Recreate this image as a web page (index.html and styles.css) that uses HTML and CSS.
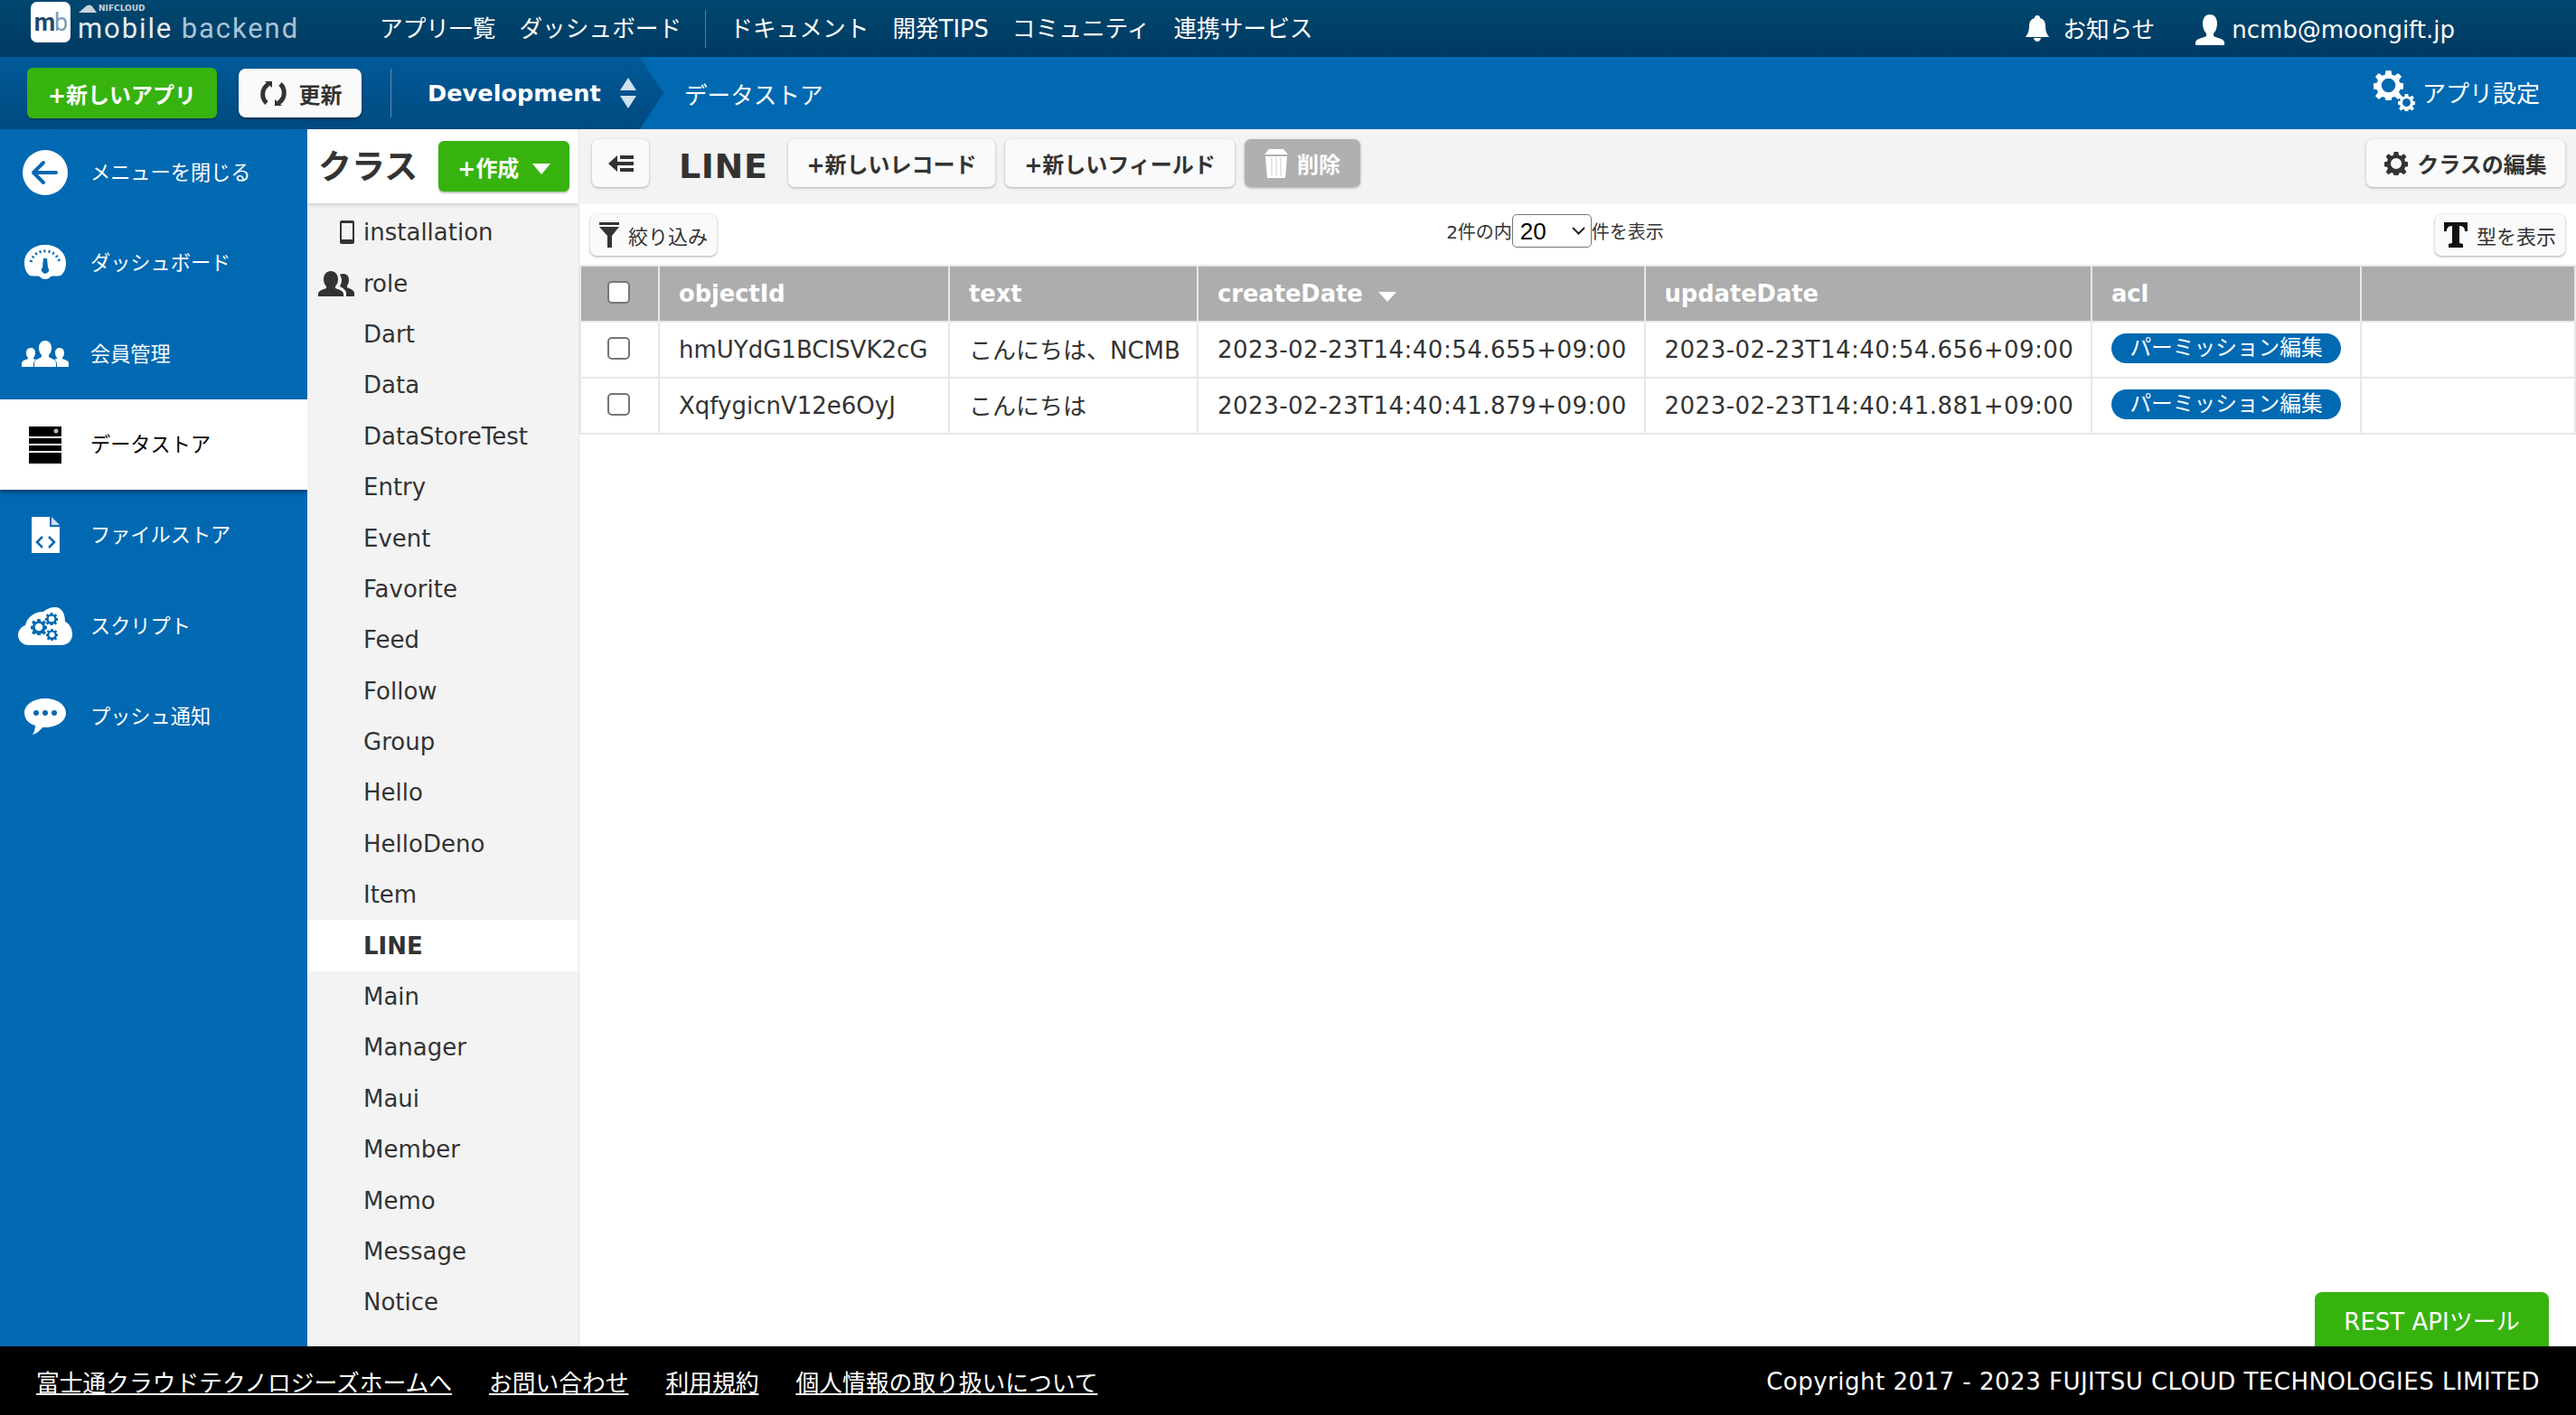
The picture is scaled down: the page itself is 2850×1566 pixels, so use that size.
FILE: index.html
```html
<!DOCTYPE html>
<html lang="ja">
<head>
    <meta charset="UTF-8">
    <title>mobile backend</title>
    <link rel="stylesheet" href="styles.css">
</head>
<body>
    <header class="top-bar">
        <div class="logo">
            <span class="logo-mark"><span class="logo-m">m</span><span class="logo-b">b</span></span>
            <div class="logo-text">
                <span class="logo-small">
                    <svg width="20" height="9" viewBox="0 0 20 9"><path fill="#c8d4dc" d="M0 9 8 2c3-2 5-2 7 0l5 7z"/></svg>
                    NIFCLOUD
                </span>
                <span class="logo-name">mobile <span class="logo-name-light">backend</span></span>
            </div>
        </div>
        <nav class="top-nav">
            <a>アプリ一覧</a>
            <a>ダッシュボード</a>
            <span class="top-sep"></span>
            <a>ドキュメント</a>
            <a>開発TIPS</a>
            <a>コミュニティ</a>
            <a>連携サービス</a>
        </nav>
        <div class="top-right">
            <a class="notice">
                <svg class="icon-bell" viewBox="0 0 28 30"><path fill="#fff" d="M14 1c2 0 3 1 3 3 4 1 6 4 6 9 0 6 2 9 4 12H1c2-3 4-6 4-12 0-5 2-8 6-9 0-2 1-3 3-3zM10 26h8c0 2-2 4-4 4s-4-2-4-4z"/></svg>
                お知らせ
            </a>
            <a class="user">
                <svg class="icon-user" viewBox="0 0 32 34"><path fill="#fff" d="M16 0c5 0 8 4 8 10 0 5-2 9-4 11v3c4 2 12 3 12 7v3H0v-3c0-4 8-5 12-7v-3c-2-2-4-6-4-11C8 4 11 0 16 0z"/></svg>
                ncmb@moongift.jp
            </a>
        </div>
    </header>

    <div class="app-bar">
        <div class="app-bar-left">
            <button class="btn-green btn-new-app">+新しいアプリ</button>
            <button class="btn-refresh">
                <svg class="icon-refresh" viewBox="0 0 33 27"><g fill="none" stroke="#333" stroke-width="5"><path d="M11 3C3 8 3 19 9 24"/><path d="M22 24C30 19 30 8 24 3"/></g><path fill="#333" d="M7 0h8v7zM26 27h-8v-7z"/></svg>
                更新
            </button>
            <span class="app-sep"></span>
            <span class="env-name">Development</span>
            <svg class="icon-updown" viewBox="0 0 20 34"><path fill="#cfe0ee" d="M10 0l9 14H1zM1 20h18l-9 14z"/></svg>
        </div>
        <span class="crumb">データストア</span>
        <a class="app-settings">
            <svg class="icon-gears" viewBox="0 0 46 46"><use href="#gear" x="0" y="0" width="33" height="33" fill="#fff"/><use href="#gear" x="27" y="26" width="19" height="19" fill="#fff"/></svg>
            アプリ設定
        </a>
    </div>

    <div class="workspace">
        <aside class="sidebar">
            <a class="side-item">
                <span class="side-icon"><svg width="50" height="50" viewBox="0 0 50 50"><circle cx="25" cy="25" r="25" fill="#fff"/><path fill="none" stroke="#0069b2" stroke-width="4" stroke-linecap="round" stroke-linejoin="round" d="M37 25H13M23 14 12 25l11 11"/></svg></span>
                <span class="side-label">メニューを閉じる</span>
            </a>
            <a class="side-item">
                <span class="side-icon"><svg width="46" height="41" viewBox="0 0 46 41"><path fill="#fff" d="M23 0c13 0 23 8 23 20 0 6-2 11-6 14-4 1-8 0-11 1-2 4-10 4-12 0-3-1-7 0-11-1C2 31 0 26 0 20 0 8 10 0 23 0z"/><path fill="none" stroke="#0069b2" stroke-width="3" stroke-dasharray="2 3" d="M7 19C10 10 16 7 23 7s13 3 16 12"/><path fill="#0069b2" d="M21 15h4l1 10a4 4 0 1 1-6 0z"/></svg></span>
                <span class="side-label">ダッシュボード</span>
            </a>
            <a class="side-item">
                <span class="side-icon"><svg width="52" height="29" viewBox="0 0 52 29"><g fill="#fff"><path d="M10 8c3 0 5 2 5 5s-1 5-2 6v1l3 1c-2 1-3 3-3 5v3H0v-4c0-3 5-4 7-5v-1c-1-1-2-3-2-5 0-4 2-6 5-6z"/><path d="M42 8c-3 0-5 2-5 5s1 5 2 6v1l-3 1c2 1 3 3 3 5v3h13v-4c0-3-5-4-7-5v-1c1-1 2-3 2-5 0-4-2-6-5-6z"/><path d="M26 0c4 0 7 3 7 8 0 3-1 6-3 8v2c3 2 8 3 8 7v4H14v-4c0-4 5-5 8-7v-2c-2-2-3-5-3-8 0-5 3-8 7-8z"/></g></svg></span>
                <span class="side-label">会員管理</span>
            </a>
            <a class="side-item side-item-active">
                <span class="side-icon"><svg width="36" height="41" viewBox="0 0 36 41"><path fill="#000" d="M0 0h36v11H0zM0 13h36v6H0zM0 21h36v6H0zM0 29h36v12H0z"/><circle cx="30" cy="5" r="2.5" fill="#bbb"/></svg></span>
                <span class="side-label">データストア</span>
            </a>
            <a class="side-item">
                <span class="side-icon"><svg width="31" height="40" viewBox="0 0 31 40"><path fill="#fff" d="M0 0h20v11h11v29H0z"/><path fill="#cfe0ee" d="M22 0l9 9h-9z"/><path fill="none" stroke="#0069b2" stroke-width="2.5" d="M12 22l-6 6 6 6M19 22l6 6-6 6"/></svg></span>
                <span class="side-label">ファイルストア</span>
            </a>
            <a class="side-item">
                <span class="side-icon"><svg width="60" height="42" viewBox="0 0 60 42"><path fill="#fff" d="M12 42C5 42 0 37 0 31c0-5 3-9 8-11 2-9 10-15 20-15 3-3 8-5 13-5 8 0 11 8 11 16 5 2 8 8 8 14 0 7-5 12-12 12z"/><use href="#gear" x="14" y="13" width="18" height="18" fill="#0069b2"/><use href="#gear" x="30" y="6" width="14" height="14" fill="#0069b2"/><use href="#gear" x="31" y="24" width="13" height="13" fill="#0069b2"/></svg></span>
                <span class="side-label">スクリプト</span>
            </a>
            <a class="side-item">
                <span class="side-icon"><svg width="46" height="40" viewBox="0 0 46 40"><path fill="#fff" d="M23 0c13 0 23 7 23 16s-10 16-23 16h-3c-3 4-7 7-11 8 2-3 3-7 3-10C5 28 0 23 0 16 0 7 10 0 23 0z"/><circle cx="13" cy="16" r="3" fill="#0069b2"/><circle cx="23" cy="16" r="3" fill="#0069b2"/><circle cx="33" cy="16" r="3" fill="#0069b2"/></svg></span>
                <span class="side-label">プッシュ通知</span>
            </a>
        </aside>

        <section class="class-panel">
            <div class="class-head">
                <h2>クラス</h2>
                <button class="btn-green btn-create">+作成 <span class="tri-white"></span></button>
            </div>
            <ul class="class-list">
                <li><span class="class-icon"><svg width="16" height="26" viewBox="0 0 16 26"><path fill="#333" fill-rule="evenodd" d="M2 0h12a2 2 0 0 1 2 2v22a2 2 0 0 1-2 2H2a2 2 0 0 1-2-2V2a2 2 0 0 1 2-2zM2 3v18h12V3z"/></svg></span>installation</li>
                <li><span class="class-icon"><svg width="40" height="28" viewBox="0 0 40 28"><path fill="#333" d="M14 0c5 0 8 4 8 9 0 3-1 6-3 8v2c3 1 9 3 9 6v3H0v-3c0-3 6-5 9-6v-2c-2-2-3-5-3-8 0-5 3-9 8-9zM28 3c4 0 6 3 6 7 0 3-1 5-2 6v2c2 1 8 3 8 6v4h-9v-4c0-3-5-6-7-7 1-2 2-4 2-7 0-2-1-4-2-6 1-1 3-1 4-1z"/></svg></span>role</li>
                <li><span class="class-icon"></span>Dart</li>
                <li><span class="class-icon"></span>Data</li>
                <li><span class="class-icon"></span>DataStoreTest</li>
                <li><span class="class-icon"></span>Entry</li>
                <li><span class="class-icon"></span>Event</li>
                <li><span class="class-icon"></span>Favorite</li>
                <li><span class="class-icon"></span>Feed</li>
                <li><span class="class-icon"></span>Follow</li>
                <li><span class="class-icon"></span>Group</li>
                <li><span class="class-icon"></span>Hello</li>
                <li><span class="class-icon"></span>HelloDeno</li>
                <li><span class="class-icon"></span>Item</li>
                <li class="class-selected"><span class="class-icon"></span>LINE</li>
                <li><span class="class-icon"></span>Main</li>
                <li><span class="class-icon"></span>Manager</li>
                <li><span class="class-icon"></span>Maui</li>
                <li><span class="class-icon"></span>Member</li>
                <li><span class="class-icon"></span>Memo</li>
                <li><span class="class-icon"></span>Message</li>
                <li><span class="class-icon"></span>Notice</li>
            </ul>
        </section>

        <main class="content">
            <div class="toolbar">
                <button class="btn-white btn-collapse">
                    <svg width="28" height="20" viewBox="0 0 28 20"><path fill="#333" d="M10 1v18L0 10zM13 1h15v4H13zM10 8h18v4H10zM13 15h15v4H13z"/></svg>
                </button>
                <h1 class="class-title">LINE</h1>
                <button class="btn-white btn-add-record">+新しいレコード</button>
                <button class="btn-white btn-add-field">+新しいフィールド</button>
                <button class="btn-disabled">
                    <svg width="26" height="32" viewBox="0 0 26 32"><path fill="#fff" d="M5 0h16l5 6H0zM1 8h24l-2 24H3z"/><path stroke="#ddd" stroke-width="1.5" d="M8 10v20M13 10v20M18 10v20"/></svg>
                    削除
                </button>
                <button class="btn-white btn-edit-class">
                    <svg width="26" height="26" viewBox="0 0 34 34"><use href="#gear" width="34" height="34" fill="#333"/></svg>
                    クラスの編集
                </button>
            </div>

            <div class="subbar">
                <button class="btn-small">
                    <svg width="22" height="28" viewBox="0 0 22 28"><path fill="#333" d="M0 0h22v3H0zM0 5h22l-8 10v13H9V15z"/></svg>
                    絞り込み
                </button>
                <div class="page-size">
                    2件の内<span class="select-wrap"><select class="page-select"><option>20</option><option>50</option><option>100</option></select><svg class="select-arrow" width="15" height="9" viewBox="0 0 15 9"><path fill="none" stroke="#222" stroke-width="2" d="M1 1l6.500 6.500L14 1"/></svg></span>件を表示
                </div>
                <button class="btn-small">
                    <svg width="26" height="28" viewBox="0 0 26 28"><path fill="#111" d="M0 0h26v10h-3c0-3-1-6-6-6v19l4 1v4H5v-4l4-1V4C4 4 3 7 3 10H0z"/></svg>
                    型を表示
                </button>
            </div>

            <table class="data-table">
                <colgroup>
                    <col class="col-check"><col class="col-id"><col class="col-text"><col class="col-date"><col class="col-date"><col class="col-acl"><col>
                </colgroup>
                <thead>
                    <tr>
                        <th class="cell-check"><input type="checkbox"></th>
                        <th>objectId</th>
                        <th>text</th>
                        <th>createDate <span class="tri-sort"></span></th>
                        <th>updateDate</th>
                        <th>acl</th>
                        <th></th>
                    </tr>
                </thead>
                <tbody>
                    <tr>
                        <td class="cell-check"><input type="checkbox"></td>
                        <td>hmUYdG1BCISVK2cG</td>
                        <td class="cell-jp">こんにちは、NCMB</td>
                        <td class="cell-date">2023-02-23T14:40:54.655+09:00</td>
                        <td class="cell-date">2023-02-23T14:40:54.656+09:00</td>
                        <td><a class="pill">パーミッション編集</a></td>
                        <td></td>
                    </tr>
                    <tr>
                        <td class="cell-check"><input type="checkbox"></td>
                        <td>XqfygicnV12e6OyJ</td>
                        <td class="cell-jp">こんにちは</td>
                        <td class="cell-date">2023-02-23T14:40:41.879+09:00</td>
                        <td class="cell-date">2023-02-23T14:40:41.881+09:00</td>
                        <td><a class="pill">パーミッション編集</a></td>
                        <td></td>
                    </tr>
                </tbody>
            </table>

            <a class="rest-tool">REST APIツール</a>
        </main>
    </div>

    <footer class="footer">
        <nav class="footer-links">
            <a>富士通クラウドテクノロジーズホームへ</a>
            <a>お問い合わせ</a>
            <a>利用規約</a>
            <a>個人情報の取り扱いについて</a>
        </nav>
        <span class="copyright">Copyright 2017 - 2023 FUJITSU CLOUD TECHNOLOGIES LIMITED</span>
    </footer>

    <svg class="sprite" xmlns="http://www.w3.org/2000/svg">
        <symbol id="gear" viewBox="0 0 34 34">
            <path fill-rule="evenodd" d="M14 0h6l1 5 3 1 4-3 4 4-3 4 1 3 5 1v6l-5 1-1 3 3 4-4 4-4-3-3 1-1 5h-6l-1-5-3-1-4 3-4-4 3-4-1-3-5-1v-6l5-1 1-3-3-4 4-4 4 3 3-1zM17 9a8 8 0 1 0 0 16 8 8 0 0 0 0-16z"/>
        </symbol>
    </svg>
</body>
</html>
```

FILE: styles.css
```css
:root {
    --blue: #0069b2;
    --green: #36b30f;
    --text-color: #333;
    --light-bg: #f3f3f3;
    --line: #e8e8e8;
}

* {
    margin: 0;
    padding: 0;
    box-sizing: border-box;
}

html, body {
    height: 100%;
}

body {
    display: flex;
    flex-direction: column;
    font-family: "DejaVu Sans", "Noto Sans CJK JP", sans-serif;
    font-size: 26px;
    color: var(--text-color);
    overflow: hidden;
}

button {
    font-family: inherit;
    border: none;
    cursor: pointer;
}

.sprite {
    display: none;
}

/* top bar */
.top-bar {
    display: flex;
    align-items: center;
    height: 63px;
    flex-shrink: 0;
    background: linear-gradient(#00476f, #003a62);
    color: #fff;
    padding-left: 34px;
}

.logo {
    display: flex;
    align-items: flex-start;
    width: 386px;
    height: 63px;
    padding-top: 2px;
    gap: 8px;
}

.logo-mark {
    display: flex;
    align-items: center;
    justify-content: center;
    width: 44px;
    height: 45px;
    background: #fff;
    border-radius: 7px;
    font-family: "Roboto", sans-serif;
    font-size: 27px;
    letter-spacing: -1px;
}

.logo-m {
    color: #1d4a6b;
    font-weight: bold;
}

.logo-b {
    color: #7f9db3;
}

.logo-text {
    display: flex;
    flex-direction: column;
}

.logo-small {
    display: flex;
    align-items: center;
    gap: 2px;
    font-size: 9px;
    font-weight: bold;
    line-height: 14px;
    padding-left: 1px;
    color: #c8d4dc;
}

.logo-name {
    font-family: "Roboto", sans-serif;
    font-size: 31px;
    line-height: 32px;
    color: #e6ecf0;
    letter-spacing: 1.9px;
    white-space: nowrap;
}

.logo-name-light {
    color: #a9c3d5;
}

.top-nav {
    display: flex;
    align-items: center;
    gap: 26px;
    margin-top: -4px;
    font-size: 25.7px;
    white-space: nowrap;
}

.top-sep {
    width: 1px;
    height: 42px;
    margin-top: 4px;
    background: #5d7f97;
}

.top-right {
    display: flex;
    align-items: center;
    margin-left: auto;
    padding-right: 134px;
    gap: 45px;
    white-space: nowrap;
}

.notice, .user {
    display: flex;
    align-items: center;
}

.notice {
    gap: 14px;
    font-size: 25.6px;
    margin-top: -2px;
}

.user {
    gap: 8px;
    margin-top: 2px;
}

.icon-bell {
    width: 28px;
    height: 30px;
}

.icon-user {
    width: 32px;
    height: 34px;
}

/* app bar */
.app-bar {
    display: flex;
    align-items: center;
    height: 80px;
    flex-shrink: 0;
    background: var(--blue);
    color: #fff;
}

.app-bar-left {
    display: flex;
    align-items: center;
    width: 734px;
    height: 80px;
    padding-left: 30px;
    background: linear-gradient(#005a98, #004a80);
    clip-path: polygon(0 0, 708px 0, 734px 50%, 708px 100%, 0 100%);
}

.btn-green {
    background: var(--green);
    color: #fff;
    font-weight: bold;
    border-radius: 6px;
    box-shadow: 0 2px 2px rgba(0,0,0,0.25);
}

.btn-new-app {
    width: 210px;
    height: 56px;
    font-size: 24px;
}

.btn-refresh {
    display: flex;
    align-items: center;
    justify-content: center;
    gap: 12px;
    width: 136px;
    height: 54px;
    margin-left: 24px;
    background: #fafafa;
    color: var(--text-color);
    font-size: 24px;
    font-weight: bold;
    border-radius: 8px;
    box-shadow: 0 2px 3px rgba(0,0,0,0.4);
}

.icon-refresh {
    width: 33px;
    height: 27px;
}

.app-sep {
    width: 1px;
    height: 54px;
    margin: 0 40px 0 32px;
    background: #5b8db3;
}

.env-name {
    font-size: 25.6px;
    font-weight: bold;
}

.icon-updown {
    width: 20px;
    height: 34px;
    margin-left: 20px;
}

.crumb {
    margin-left: 23px;
    font-size: 25.6px;
}

.app-settings {
    display: flex;
    align-items: center;
    gap: 8px;
    margin-left: auto;
    padding-right: 40px;
    font-size: 26px;
    margin-top: -4px;
}

.icon-gears {
    width: 46px;
    height: 46px;
}

/* main area */
.workspace {
    display: flex;
    flex: 1;
    min-height: 0;
}

.sidebar {
    width: 340px;
    flex-shrink: 0;
    background: var(--blue);
    color: #fff;
    padding-bottom: 3px;
    font-size: 22.2px;
}

.side-item {
    display: flex;
    align-items: center;
    height: 100.3px;
    white-space: nowrap;
}

.side-item:first-child {
    margin-top: -2px;
}

.side-icon {
    display: flex;
    align-items: center;
    justify-content: center;
    width: 100px;
    flex-shrink: 0;
}

.side-label {
    margin-top: -4px;
}

.side-item-active {
    background: #fff;
    color: #000;
    box-shadow: 0 3px 4px rgba(0,0,0,0.4);
}

.class-panel {
    display: flex;
    flex-direction: column;
    width: 301px;
    flex-shrink: 0;
    background: var(--light-bg);
    border-right: 1px solid #e4e4e4;
    overflow: hidden;
}

.class-head {
    display: flex;
    align-items: center;
    justify-content: space-between;
    flex-shrink: 0;
    height: 82px;
    padding: 0 10px 0 12px;
    background: #fff;
    box-shadow: 0 2px 4px rgba(0,0,0,0.15);
}

.class-head h2 {
    margin-top: -5px;
    font-size: 37px;
    font-weight: bold;
}

.btn-create {
    width: 145px;
    height: 56px;
    font-size: 24px;
}

.tri-white {
    display: inline-block;
    margin-left: 6px;
    border-left: 10px solid transparent;
    border-right: 10px solid transparent;
    border-top: 12px solid #fff;
    vertical-align: 2px;
}

.class-list {
    list-style: none;
    padding-top: 4px;
}

.class-list li {
    display: flex;
    align-items: center;
    height: 56.4px;
    white-space: nowrap;
}

.class-icon {
    display: flex;
    justify-content: flex-end;
    width: 62px;
    padding-right: 10px;
    flex-shrink: 0;
}

.class-selected {
    background: #fff;
    font-weight: bold;
}

.content {
    position: relative;
    flex: 1;
    min-width: 0;
    background: #fff;
}

.toolbar {
    display: flex;
    align-items: center;
    height: 83px;
    background: var(--light-bg);
    padding: 0 12px 8px 14px;
}

.btn-white, .btn-disabled {
    display: flex;
    align-items: center;
    justify-content: center;
    height: 53px;
    background: #fafafa;
    color: var(--text-color);
    font-size: 24px;
    font-weight: bold;
    border-radius: 7px;
    box-shadow: 0 1px 3px rgba(0,0,0,0.3);
}

.btn-collapse {
    width: 63px;
}

.class-title {
    width: 154px;
    padding: 7px 0 0 33px;
    font-size: 38px;
    font-weight: bold;
    letter-spacing: 0.6px;
}

.btn-add-record {
    width: 229px;
}

.btn-add-field {
    width: 254px;
    margin-left: 11px;
}

.btn-disabled {
    gap: 10px;
    width: 128px;
    margin-left: 11px;
    background: #b0b0b0;
    color: #fff;
}

.btn-edit-class {
    gap: 10px;
    width: 220px;
    margin-left: auto;
}

.subbar {
    display: flex;
    align-items: center;
    justify-content: space-between;
    height: 67px;
    padding: 0 12px;
}

.btn-small {
    display: flex;
    align-items: center;
    gap: 10px;
    height: 46px;
    padding: 0 10px;
    background: #fafafa;
    color: var(--text-color);
    font-size: 22px;
    border-radius: 7px;
    box-shadow: 0 1px 3px rgba(0,0,0,0.35);
}

.page-size {
    display: flex;
    align-items: center;
    margin: -8px 46px 0 0;
    font-size: 20px;
}

.select-wrap {
    position: relative;
    display: block;
    height: 37px;
}

.page-select {
    display: block;
    width: 88px;
    height: 37px;
    padding-left: 8px;
    appearance: none;
    font-family: "Liberation Sans", sans-serif;
    font-size: 26px;
    color: #000;
    background: #fff;
    border: 1px solid #767676;
    border-radius: 5px;
}

.select-arrow {
    position: absolute;
    right: 7px;
    top: 14px;
    pointer-events: none;
}

.data-table {
    width: 100%;
    border-collapse: collapse;
    table-layout: fixed;
}

.col-check { width: 87px; }
.col-id { width: 321px; }
.col-text { width: 275px; }
.col-date { width: 494.500px; }
.col-acl { width: 298px; }

.data-table th, .data-table td {
    height: 62px;
    padding: 0 21px;
    border: 2px solid var(--line);
    text-align: left;
    white-space: nowrap;
}

.data-table th {
    background: #adadad;
    color: #fff;
    font-size: 25.7px;
    font-weight: bold;
}

.data-table .cell-check {
    padding: 0 3px 0 0;
    text-align: center;
}

.cell-check input {
    display: block;
    width: 25px;
    height: 25px;
    margin: -4px auto 0;
    appearance: none;
    background: #fff;
    border: 2px solid #767676;
    border-radius: 5px;
}

.data-table .cell-jp {
    padding-bottom: 4px;
}

.cell-date {
    letter-spacing: 0.5px;
}

.tri-sort {
    display: inline-block;
    margin-left: 8px;
    border-left: 10px solid transparent;
    border-right: 10px solid transparent;
    border-top: 11px solid #fff;
    vertical-align: 0;
}

.pill {
    display: block;
    height: 33px;
    line-height: 32px;
    text-align: center;
    margin-top: -4px;
    background: var(--blue);
    color: #fff;
    font-size: 23.7px;
    border-radius: 17px;
}

.rest-tool {
    position: absolute;
    right: 30px;
    bottom: 0;
    width: 259px;
    height: 60px;
    line-height: 66px;
    text-align: center;
    background: var(--green);
    color: #fff;
    border-radius: 8px 8px 0 0;
}

/* footer */
.footer {
    display: flex;
    align-items: center;
    justify-content: space-between;
    height: 76px;
    flex-shrink: 0;
    padding: 0 40px;
    background: #000;
    color: #fff;
}

.footer-links {
    display: flex;
    gap: 41px;
    font-size: 25.75px;
}

.footer-links a {
    text-decoration: underline;
}

.copyright {
    margin-top: 2px;
    letter-spacing: 0.5px;
}
```
